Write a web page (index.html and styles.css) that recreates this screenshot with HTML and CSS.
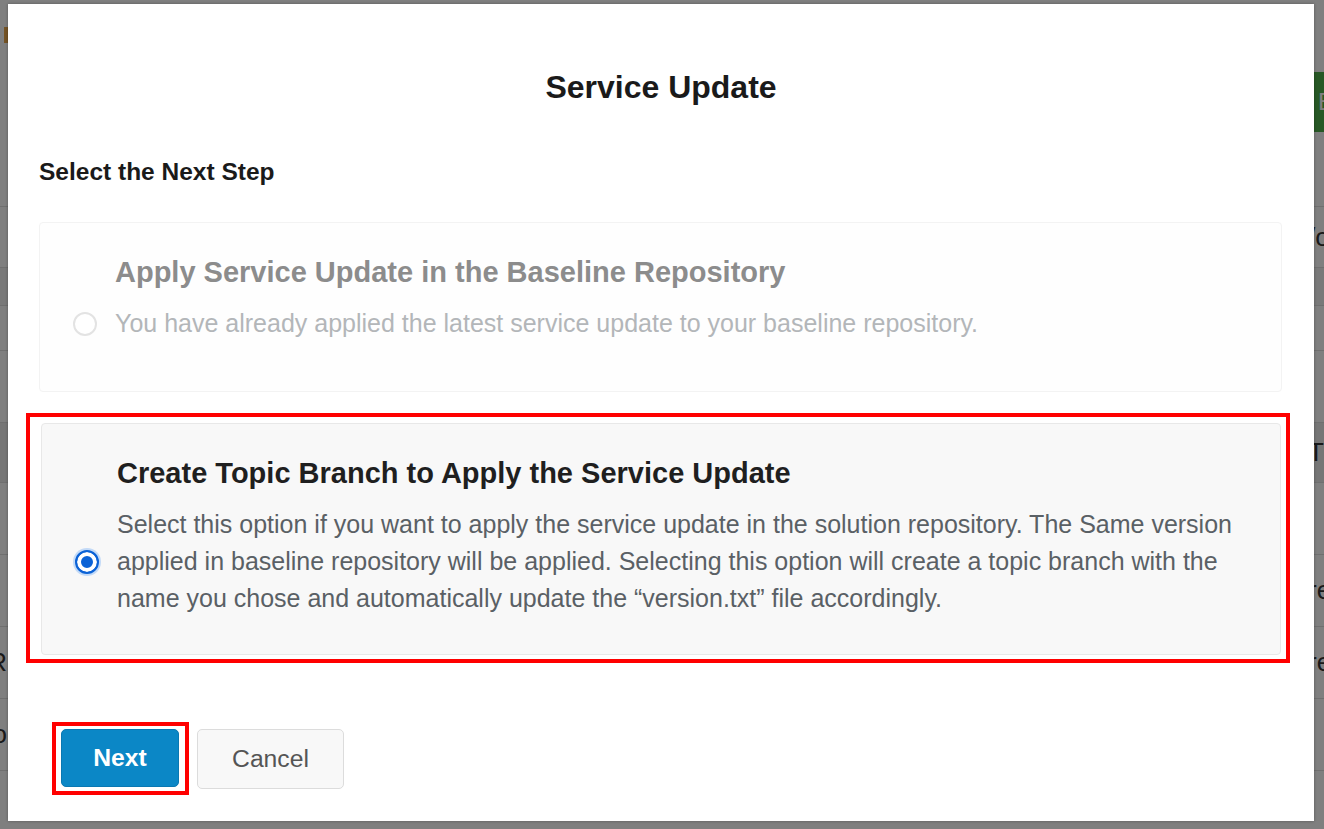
FILE: index.html
```html
<!DOCTYPE html>
<html lang="en">
    <head>
        <meta charset="UTF-8">
        <meta name="viewport" content="width=device-width, initial-scale=1.0">
        <link rel="stylesheet" href="styles.css">
        <title>Service Update</title>
    </head>
    <body>

        <!-- page behind the dialog -->
        <div class="page">
            <header class="page-header">
                <span class="crumb-icon"></span>
                <div class="toolbar">
                    <button class="btn-green">EDIT</button>
                </div>
            </header>
            <div class="table">
                <div class="row"><span class="cell-l"></span><span class="cell-r">/o</span></div>
                <div class="row row-dark"><span class="cell-l"></span><span class="cell-r"></span></div>
                <div class="row row-mid"><span class="cell-l"></span><span class="cell-r"></span></div>
                <div class="row row-tall"><span class="cell-l"></span><span class="cell-r"></span></div>
                <div class="row row-head"><span class="cell-l"></span><span class="cell-r">Tr</span></div>
                <div class="row row-tall"><span class="cell-l"></span><span class="cell-r"></span></div>
                <div class="row row-tall"><span class="cell-l"></span><span class="cell-r">re</span></div>
                <div class="row row-tall"><span class="cell-l">PR</span><span class="cell-r">re</span></div>
                <div class="row row-tall"><span class="cell-l">Do</span><span class="cell-r"></span></div>
            </div>
        </div>

        <div class="backdrop"></div>

        <div class="modal">
            <h1 class="modal-title">Service Update</h1>

            <div class="modal-body">
                <h2 class="step-label">Select the Next Step</h2>

                <label class="option option-disabled">
                    <span class="option-title">Apply Service Update in the Baseline Repository</span>
                    <span class="radio"></span>
                    <span class="option-desc">You have already applied the latest service update to your baseline repository.</span>
                </label>

                <div class="highlight highlight-card">
                    <label class="option option-active">
                        <span class="option-title">Create Topic Branch to Apply the Service Update</span>
                        <span class="radio checked"></span>
                        <span class="option-desc">Select this option if you want to apply the service update in the solution repository. The Same version applied in baseline repository will be applied. Selecting this option will create a topic branch with the name you chose and automatically update the &ldquo;version.txt&rdquo; file accordingly.</span>
                    </label>
                </div>
            </div>

            <div class="modal-footer">
                <span class="highlight highlight-btn">
                    <button class="btn btn-primary">Next</button>
                </span>
                <button class="btn btn-default">Cancel</button>
            </div>
        </div>

    </body>
</html>
```

FILE: styles.css
```css
body {
    font-family: 'Liberation Sans', Arial, sans-serif;
    background: #fff;
    margin: 0;
    width: 1324px;
    height: 829px;
    overflow: hidden;
    position: relative;
}

/* page behind */

.page-header {
    height: 207px;
    padding-top: 27px;
    box-sizing: border-box;
    border-bottom: 1px solid #dedede;
}

.crumb-icon {
    display: block;
    width: 12px;
    height: 16px;
    margin-left: 4px;
    background: #e8a64a;
}

.toolbar {
    display: flex;
    justify-content: flex-end;
    margin-top: 29px;
}

.btn-green {
    width: 100px;
    height: 60px;
    margin-right: -90px;
    background: #4fb04a;
    color: #fff;
    border: none;
    font-family: inherit;
    font-size: 24px;
    text-align: left;
    padding-left: 4px;
}

.row {
    display: flex;
    justify-content: space-between;
    align-items: center;
    height: 60px;
    border-bottom: 1px solid #dedede;
    font-size: 26px;
    color: #333;
}

.row-dark {
    height: 37px;
    background: #f2f2f2;
}

.row-mid {
    height: 44px;
}

.row-tall {
    height: 71px;
}

.row-head {
    height: 59px;
    background: #ececec;
}

.cell-l {
    width: 48px;
    margin-left: -41px;
    text-align: right;
    white-space: nowrap;
    overflow: hidden;
}

.cell-r {
    width: 40px;
    margin-right: -24px;
    white-space: nowrap;
    overflow: hidden;
}

.backdrop {
    position: absolute;
    inset: 0;
    background: rgba(0, 0, 0, 0.5);
}

/* dialog */

.modal {
    position: absolute;
    left: 8px;
    top: 4px;
    width: 1306px;
    height: 817px;
    background: #fff;
    box-shadow: 0 0 3px rgba(0, 0, 0, 0.3);
}

.modal-title {
    margin: 0;
    padding-top: 63px;
    font-size: 32px;
    line-height: 40px;
    text-align: center;
    color: #1a1a1a;
}

.modal-body {
    padding: 0 32px 0 31px;
}

.step-label {
    margin: 50px 0 0;
    font-size: 24.5px;
    line-height: 30px;
    color: #1a1a1a;
}

.option {
    display: grid;
    grid-template-columns: 24px 1fr;
    align-content: start;
    column-gap: 18px;
    padding: 31px 20px 37px 33px;
    border-radius: 4px;
    box-sizing: border-box;
}

.option-title {
    grid-column: 2;
    font-size: 29px;
    font-weight: bold;
    line-height: 36px;
    margin-bottom: 15px;
}

.radio {
    grid-column: 1;
    grid-row: 2;
    align-self: center;
    width: 24px;
    height: 24px;
    border-radius: 50%;
    box-sizing: border-box;
    border: 2px solid #e3e3e3;
    background: #fff;
}

.radio.checked {
    border-color: #0b62d6;
    background: #0b62d6;
    box-shadow: inset 0 0 0 4px #fff, 0 0 0 2px #c3daf7;
}

.option-desc {
    grid-column: 2;
    grid-row: 2;
    font-size: 25px;
    line-height: 37px;
}

.option-disabled {
    margin-top: 35px;
    min-height: 170px;
    background: #fefefe;
    border: 1px solid #f3f3f3;
}

.option-disabled .option-title {
    color: #8c8c8c;
}

.option-disabled .option-desc {
    color: #b3b6b9;
}

.option-active {
    background: #f8f8f8;
    border: 1px solid #e8e8e8;
}

.option-active .option-title {
    color: #1f1f1f;
}

.option-active .option-desc {
    color: #5a6065;
}

/* red annotation boxes */

.highlight {
    border: 4px solid #f00;
}

.highlight-card {
    margin: 21px -8px 0 -13px;
    padding: 6px 5px 4px 11px;
}

.highlight-btn {
    display: block;
    padding: 3px 6px 4px 5px;
}

.modal-footer {
    display: flex;
    align-items: center;
    gap: 8px;
    margin-top: 59px;
    padding-left: 44px;
}

.btn {
    font-family: inherit;
    font-size: 24.7px;
    border-radius: 5px;
    cursor: pointer;
    padding: 0;
}

.btn-primary {
    display: block;
    width: 118px;
    height: 58px;
    background: #0b87c6;
    border: 1px solid #0a78b2;
    color: #fff;
    font-weight: bold;
}

.btn-default {
    width: 147px;
    height: 60px;
    background: #f8f8f8;
    border: 1px solid #dcdcdc;
    color: #555;
}
```
